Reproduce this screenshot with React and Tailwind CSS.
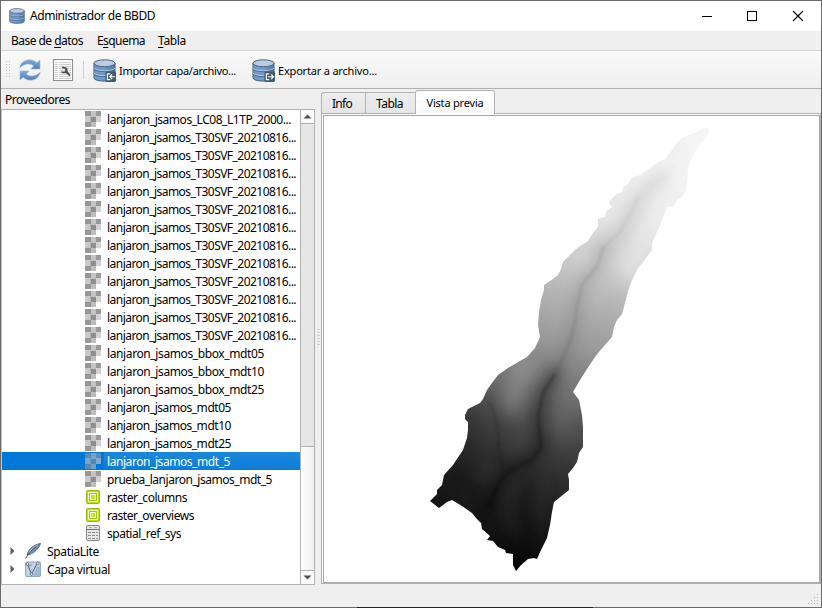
import React from "react";

const rows = [
  { t: "lanjaron_jsamos_LC08_L1TP_2000...", w: 184 },
  ...Array.from({ length: 12 }, () => ({ t: "lanjaron_jsamos_T30SVF_20210816...", w: 189 })),
  { t: "lanjaron_jsamos_bbox_mdt05", w: 157 },
  { t: "lanjaron_jsamos_bbox_mdt10", w: 157 },
  { t: "lanjaron_jsamos_bbox_mdt25", w: 157 },
  { t: "lanjaron_jsamos_mdt05", w: 124 },
  { t: "lanjaron_jsamos_mdt10", w: 124 },
  { t: "lanjaron_jsamos_mdt25", w: 124 },
  { t: "lanjaron_jsamos_mdt_5", w: 123, selected: true },
  { t: "prueba_lanjaron_jsamos_mdt_5", w: 165 },
  { t: "raster_columns", w: 80, icon: "polygon" },
  { t: "raster_overviews", w: 87, icon: "polygon" },
  { t: "spatial_ref_sys", w: 74, icon: "table" },
];

// Label whose letter spacing is adjusted so that it occupies the width w.
function Label({ w, children, className = "" }) {
  const ref = React.useRef(null);
  const [ls, setLs] = React.useState(0);
  React.useLayoutEffect(() => {
    const el = ref.current;
    const n = el.textContent.length;
    el.style.letterSpacing = "0px";
    const v = (w - el.getBoundingClientRect().width) / n;
    el.style.letterSpacing = v + "px";
    setLs(v);
  }, [w]);
  return (
    <span ref={ref} className={"whitespace-pre " + className} style={{ letterSpacing: ls + "px" }}>
      {children}
    </span>
  );
}

function Db({ size, arrow }) {
  return (
    <svg width={size} height={size} viewBox="0 0 24 24" className="block shrink-0">
      <defs>
        <linearGradient id="dbBody" x1="0" x2="1">
          <stop offset="0" stopColor="#7197c4" />
          <stop offset="0.45" stopColor="#6f9bd0" />
          <stop offset="1" stopColor="#5279a8" />
        </linearGradient>
      </defs>
      <path d="M1 4.2V19.8C1 24.2 23 24.2 23 19.8V4.2Z" fill="url(#dbBody)" stroke="#4b6076" strokeWidth="1" />
      <path d="M1 9.2C1 13.2 23 13.2 23 9.2M1 14.4C1 18.4 23 18.4 23 14.4" fill="none" stroke="#c3d3e5" strokeWidth="0.9" />
      <path d="M1 10.2C1 14.2 23 14.2 23 10.2M1 15.4C1 19.4 23 19.4 23 15.4" fill="none" stroke="#456789" strokeWidth="0.9" />
      <ellipse cx="12" cy="4.4" rx="11" ry="3.6" fill="#b9cce1" stroke="#4b6076" strokeWidth="1" />
      {arrow && (
        <g>
          <rect x="13" y="13" width="11" height="11" rx="1.5" fill="#415a6b" />
          {arrow === "in" ? (
            <path d="M18 15.5H15V21.5H18M23 18.5H17.5M20 16L17.5 18.5L20 21" fill="none" stroke="#fff" strokeWidth="1.2" />
          ) : (
            <path d="M18 15.5H15V21.5H18M16.5 18.5H22.5M20 16L22.5 18.5L20 21" fill="none" stroke="#fff" strokeWidth="1.2" />
          )}
        </g>
      )}
    </svg>
  );
}

function Refresh() {
  return (
    <svg width="22" height="22" viewBox="0 0 22 22" className="block shrink-0">
      <defs>
        <linearGradient id="rf" x1="0" y1="0" x2="0" y2="1">
          <stop offset="0" stopColor="#82aadb" />
          <stop offset="1" stopColor="#4d7fba" />
        </linearGradient>
      </defs>
      <path d="M0.8 9C1.5 3.5 6 0.8 10.5 0.8C13.7 0.8 16 2 17.8 3.7L21 1V10H11.8L14.7 7C12 4.2 5.5 3.8 0.8 9Z" fill="url(#rf)" stroke="#9dbbe0" strokeWidth="0.6" />
      <path d="M21.2 13C20.5 18.5 16 21.2 11.5 21.2C8.3 21.2 6 20 4.2 18.3L1 21V12H10.2L7.3 15C10 17.8 16.5 18.2 21.2 13Z" fill="url(#rf)" stroke="#9dbbe0" strokeWidth="0.6" />
    </svg>
  );
}

function SqlWindow() {
  return (
    <svg width="20" height="22" viewBox="0 0 20 22" className="block shrink-0">
      <rect x="0.5" y="0.5" width="19" height="21" fill="#fbfbfb" stroke="#8c8c8c" />
      <path d="M2 3.5H18M2 5.5H18M2 7.5H18M2 9.5H18M2 11.5H18M2 13.5H18M2 15.5H18M2 17.5H18M2 19.5H18" stroke="#cfcfcf" />
      <path d="M5.5 1V21" stroke="#fbfbfb" />
      <path d="M9 8C11 7.3 13.4 8 14.2 9.7C14.8 11 14.3 12.2 15.2 13.3L17.6 16L16.4 17.3L13.6 14.4C12.3 13.8 10.2 14.8 8.4 13.4V12.2L11.2 12.8L12.5 11.7L11.7 9.7L9 9.2Z" fill="#4a4a4a" />
    </svg>
  );
}

function Raster({ selected }) {
  return (
    <svg width="16" height="16" viewBox="0 0 16 16" className="block shrink-0" shapeRendering="crispEdges">
      <rect width="16" height="16" fill={selected ? "#0078d7" : "#fff"} />
      <rect x="0" y="0" width="6" height="5" fill="#969696" />
      <rect x="6" y="0" width="5" height="6" fill="#c4c4c4" />
      <rect x="11" y="0" width="5" height="5" fill="#999" />
      <rect x="0" y="5" width="6" height="6" fill="#c9c9c9" />
      <rect x="6" y="6" width="5" height="5" fill="#8f8f8f" />
      <rect x="11" y="5" width="5" height="6" fill="#d1d1d1" />
      <rect x="0" y="11" width="6" height="5" fill="#979797" />
      <rect x="6" y="11" width="5" height="5" fill="#bdbdbd" />
      <rect x="5" y="5" width="1" height="6" fill="#b1b1b1" />
      {selected && <rect width="16" height="16" fill="#0078d7" opacity="0.42" />}
    </svg>
  );
}

function Polygon() {
  return (
    <svg width="16" height="16" viewBox="0 0 16 16" className="block shrink-0">
      <rect x="1.5" y="1.5" width="13" height="13" rx="1" fill="#b9dc1c" stroke="#94bd00" />
      <rect x="3.5" y="3.5" width="9" height="9" fill="#9dc51a" stroke="#f4fac8" />
      <rect x="5.5" y="5.5" width="5" height="5" fill="#c4e33c" stroke="#f4fac8" />
    </svg>
  );
}

function TableIcon() {
  return (
    <svg width="16" height="16" viewBox="0 0 16 16" className="block shrink-0">
      <rect x="1.5" y="0.5" width="13" height="15" rx="1.5" fill="#e6e6e6" stroke="#858585" />
      <path d="M2 4.5H14" stroke="#777" />
      <path d="M4 2.5H7M9 2.5H12" stroke="#aaa" />
      <path d="M3 7.5H6M7 7.5H10M11 7.5H13M3 10.5H6M7 10.5H10M11 10.5H13M3 13.5H6M7 13.5H10M11 13.5H13" stroke="#8c8c8c" />
    </svg>
  );
}

function Feather() {
  return (
    <svg width="16" height="16" viewBox="0 0 16 16" className="block shrink-0">
      <path d="M2 12C3 7 8 1.5 15.5 0.5C14.5 4 11 8.5 6.5 10.8C4.8 11.7 3.4 12 2 12Z" fill="#6f94b8" stroke="#405f7c" strokeWidth="0.8" />
      <path d="M0.7 15.5C3 10.5 8 5.5 14.5 1.2" fill="none" stroke="#3b4f63" strokeWidth="1" />
      <path d="M4 9.5C6.5 6 10 3 13.5 1.7" fill="none" stroke="#c1d3e3" strokeWidth="0.8" />
    </svg>
  );
}

function Virtual() {
  return (
    <svg width="16" height="16" viewBox="0 0 16 16" className="block shrink-0">
      <rect x="0.5" y="1" width="15" height="14.5" rx="1" fill="#c0d2e5" stroke="#7d98b4" strokeWidth="0.8" />
      <path d="M15 5V15H8L12 6Z" fill="#9ab8d8" />
      <path d="M2.5 3L6.5 13L12.5 2" fill="none" stroke="#50606e" strokeWidth="1" />
      <path d="M2.5 3C4 5 5.5 5 7 3.5" fill="none" stroke="#7b8791" strokeWidth="0.8" />
      <circle cx="2.5" cy="3" r="1.3" fill="#e9eff5" stroke="#50606e" strokeWidth="0.7" />
      <circle cx="6.5" cy="13" r="1.3" fill="#e9eff5" stroke="#50606e" strokeWidth="0.7" />
      <circle cx="12.8" cy="2.2" r="1.3" fill="#e9eff5" stroke="#50606e" strokeWidth="0.7" />
    </svg>
  );
}

const outline =
  "708,128 703,128 695,133 688,135 682,138 675,145 672,150 668,155 666,159 660,161 650,168 640,175 632,177 628,184 623,187 622,192 615,195 609,202 612,207 606,212 605,217 598,219 598,227 593,233 588,241 580,246 575,250 563,262 561,269 558,275 550,281 544,285 544,290 541,300 539,312 538,325 540,337 535,348 527,357 520,361 508,368 498,375 492,383 487,390 483,399 480,403 468,409 465,415 465,419 468,422 468,430 467,438 463,450 453,465 444,475 442,485 437,490 437,494 430,501 439,508 447,502 452,500 462,506 472,513 476,518 481,523 482,529 490,536 487,540 493,541 498,547 505,550 506,553 513,554 513,565 516,571 521,565 528,559 534,558 537,559 541,550 547,538 550,525 552,512 554,502 569,490 569,480 568,474 573,468 577,462 579,453 583,447 583,427 582,415 579,400 573,392 580,380 587,369 593,360 598,353 605,345 612,337 614,327 617,320 622,314 624,307 628,291 632,280 638,268 643,262 652,250 652,243 660,225 667,207 674,206 677,199 682,197 686,190 687,182 688,168 691,160 693,155 700,144 706,138 709,131";

const full = { filterUnits: "userSpaceOnUse", x: 380, y: 100, width: 380, height: 500 };

function Terrain() {
  return (
    <svg width="495" height="466" viewBox="324 116 495 466" className="block">
      <defs>
        <linearGradient id="relief" gradientUnits="userSpaceOnUse" x1="628" y1="128" x2="520" y2="566">
          <stop offset="0" stopColor="#f2f2f2" />
          <stop offset="0.1" stopColor="#ececec" />
          <stop offset="0.2" stopColor="#e0e0e0" />
          <stop offset="0.3" stopColor="#cecece" />
          <stop offset="0.4" stopColor="#b2b2b2" />
          <stop offset="0.5" stopColor="#989898" />
          <stop offset="0.57" stopColor="#7c7c7c" />
          <stop offset="0.64" stopColor="#5e5e5e" />
          <stop offset="0.71" stopColor="#454545" />
          <stop offset="0.78" stopColor="#303030" />
          <stop offset="0.86" stopColor="#202020" />
          <stop offset="0.93" stopColor="#151515" />
          <stop offset="1" stopColor="#060606" />
        </linearGradient>
        <clipPath id="basin">
          <polygon points={outline} />
        </clipPath>
        <filter id="wide" {...full}>
          <feGaussianBlur stdDeviation="9" />
        </filter>
        <filter id="mid" {...full}>
          <feGaussianBlur stdDeviation="6.5" />
        </filter>
        <filter id="fine" {...full}>
          <feGaussianBlur stdDeviation="1.8" />
        </filter>
      </defs>
      <g clipPath="url(#basin)" shapeRendering="crispEdges">
        <rect x="420" y="120" width="300" height="455" fill="url(#relief)" />
        <g fill="none" strokeLinejoin="round" strokeLinecap="round">
          <path d="M524 366L514 388L512 405" stroke="#b0b0b0" strokeWidth="18" opacity="0.45" filter="url(#wide)" />
          <path d="M468 408L472 440L455 475L440 500" stroke="#000" strokeWidth="24" opacity="0.22" filter="url(#wide)" />
          <path d="M574 395L568 415L558 435" stroke="#909090" strokeWidth="14" opacity="0.3" filter="url(#wide)" />
          <path d="M708 128L690 165L678 195L660 215L645 245L628 275" stroke="#fff" strokeWidth="16" opacity="0.5" filter="url(#wide)" />
          <path d="M670 160L640 178L615 205L603 225" stroke="#fff" strokeWidth="8" opacity="0.35" filter="url(#mid)" />
          <path d="M664 175L650 185L638 198L630 215L620 232L603 248" stroke="#777" strokeWidth="10" opacity="0.16" filter="url(#mid)" />
          <path d="M603 248L598 265L582 285L577 307L575 323L568 347L557 370L543 393" stroke="#303030" strokeWidth="10" opacity="0.17" filter="url(#mid)" />
          <path d="M555 372L543 395L538 417L541 447L532 460L507 472L497 487L488 507L484 520" stroke="#000" strokeWidth="11" opacity="0.38" filter="url(#mid)" />
          <path d="M638 198L630 215L620 232L603 248" stroke="#666" strokeWidth="2" opacity="0.1" filter="url(#fine)" />
          <path d="M603 248L598 265L582 285L577 307L575 323L568 347L557 370" stroke="#222" strokeWidth="2" opacity="0.14" filter="url(#fine)" />
          <path d="M555 374L543 393L538 417L541 447L532 460L507 472L497 487L488 507" stroke="#000" strokeWidth="3" opacity="0.25" filter="url(#fine)" />
          <path d="M489 395L497 420L498 445L502 467" stroke="#000" strokeWidth="5" opacity="0.25" filter="url(#mid)" />
          <path d="M490 403L497 423L499 445L502 463" stroke="#000" strokeWidth="1.5" opacity="0.2" filter="url(#fine)" />
          <path d="M540 445L558 432L580 420" stroke="#000" strokeWidth="4" opacity="0.15" filter="url(#mid)" />
          <path d="M455 470L470 483L480 505M530 480L525 510L530 530L522 565" stroke="#000" strokeWidth="6" opacity="0.4" filter="url(#mid)" />
          <path d="M512 483L505 510L515 535M545 480L538 510L543 530M492 465L480 480" stroke="#555" strokeWidth="5" opacity="0.2" filter="url(#mid)" />
        </g>
      </g>
    </svg>
  );
}

function Arrow({ up }) {
  return (
    <svg width="9" height="5" viewBox="0 0 9 5" className="block">
      <path d={up ? "M0.5 4.5L4.5 0.5L8.5 4.5Z" : "M0.5 0.5L4.5 4.5L8.5 0.5Z"} fill="#505050" />
    </svg>
  );
}

function TreeRoot({ icon, text, w }) {
  return (
    <div className="flex h-[18px] items-center pl-[8px]">
      <svg width="5" height="8" viewBox="0 0 5 8" className="block"><path d="M0.5 0L4.5 4L0.5 8Z" fill="#5c5c5c" /></svg>
      <div className="ml-[10px]">{icon}</div>
      <div className="ml-[6px] pt-[2px]"><Label w={w}>{text}</Label></div>
    </div>
  );
}

export default function App() {
  return (
    <div className="relative flex h-[608px] w-[822px] flex-col border border-[#6b6b6b] bg-[#efefef] font-['Noto_Sans','Open_Sans',sans-serif] text-[12px] leading-[18px] text-black">
      <div className="flex h-[30px] shrink-0 items-center bg-white pl-2">
        <Db size={16} />
        <div className="ml-[5px] flex-1"><Label w={125}>Administrador de BBDD</Label></div>
        <svg width="103" height="12" viewBox="0 0 103 12" className="mr-[16px] block">
          <g fill="none" stroke="#000">
            <path d="M0 6.5H10M45.5 1.5H54.5V10.5H45.5Z" shapeRendering="crispEdges" />
            <path d="M91 1L101 11M101 1L91 11" strokeWidth="1.1" />
          </g>
        </svg>
      </div>
      <div className="flex h-[20px] shrink-0 items-center border-b border-[#d6d6d6] pl-[10px]">
        <Label w={72}>Base de <u className="underline-offset-2">d</u>atos</Label>
        <Label w={48} className="ml-[14px]">E<u className="underline-offset-2">s</u>quema</Label>
        <Label w={28} className="ml-[13px]"><u className="underline-offset-2">T</u>abla</Label>
      </div>
      <div className="flex h-[38px] shrink-0 items-center border-b border-[#b1b1b1] bg-linear-to-b from-[#fafafa] to-[#efefef] pl-[5px] text-[11px]">
        <svg width="5" height="18" className="block">
          <g stroke="#bcbcbc" strokeDasharray="1 2"><path d="M0.5 0V18M3.5 0V18" /></g>
        </svg>
        <div className="ml-[8px]"><Refresh /></div>
        <div className="ml-[12px]"><SqlWindow /></div>
        <div className="ml-[10px] h-[18px] w-px bg-[#d0d0d0]" />
        <div className="ml-[9px] pt-px"><Db size={23} arrow="in" /></div>
        <Label w={117} className="ml-[3px] pt-[2px]">Importar capa/archivo...</Label>
        <div className="ml-[16px] pt-px"><Db size={23} arrow="out" /></div>
        <Label w={99} className="ml-[3px] pt-[2px]">Exportar a archivo...</Label>
      </div>
      <div className="flex h-[496px] shrink-0">
        <div className="w-[314px]">
          <div className="h-[20px] pl-1 pt-[2px]"><Label w={65}>Proveedores</Label></div>
          <div className="flex h-[476px] border border-[#b1b1b1] border-l-[#c4c4c4] bg-white">
            <div className="w-[298px]">
              {rows.map((r, i) => (
                <div key={i} className={"flex h-[18px] items-center pl-[83px] " + (r.selected ? "bg-[#0078d7] text-white" : "")}>
                  {r.icon === "polygon" ? <Polygon /> : r.icon === "table" ? <TableIcon /> : <Raster selected={r.selected} />}
                  <div className={"ml-[3px] flex h-[18px] flex-1 items-center pl-[3px] pt-[2px] " + (r.selected ? "bg-linear-to-b from-[#1b87de] to-[#0b7cd9]" : "")}>
                    <Label w={r.w}>{r.t}</Label>
                  </div>
                </div>
              ))}
              <TreeRoot icon={<Feather />} text="SpatiaLite" w={52} />
              <TreeRoot icon={<Virtual />} text="Capa virtual" w={63} />
            </div>
            <div className="flex w-[14px] flex-col border-l border-[#b1b1b1]">
              <div className="flex h-[14px] items-center justify-center border-b border-[#b1b1b1] bg-[#fafafa]"><Arrow up /></div>
              <div className="h-[323px] border-b border-[#b1b1b1] bg-[#e6e6e6]" />
              <div className="h-[124px] border-b border-[#b1b1b1] bg-linear-to-r from-white to-[#f0f0f0]" />
              <div className="flex flex-1 items-center justify-center bg-[#fafafa]"><Arrow /></div>
            </div>
          </div>
        </div>
        <div className="flex w-[6px] items-center justify-center">
          <svg width="3" height="16" className="block"><path d="M1.5 0V16" stroke="#c0c0c0" strokeWidth="2" strokeDasharray="1 2" /></svg>
        </div>
        <div className="flex w-[500px] flex-col">
          <div className="flex h-[25px] items-end">
            <div className="flex h-[22px] w-[44px] items-center rounded-tl-[3px] border border-r-0 border-[#b1b1b1] bg-linear-to-b from-[#ededed] to-[#e6e6e6] pl-[10px] pt-[2px]"><Label w={20}>Info</Label></div>
            <div className="flex h-[22px] w-[50px] items-center border border-r-0 border-[#b1b1b1] bg-linear-to-b from-[#ededed] to-[#e6e6e6] pl-[10px] pt-[2px]"><Label w={27}>Tabla</Label></div>
            <div className="flex h-[24px] w-[80px] items-center justify-center rounded-t-[3px] border border-b-0 border-[#b1b1b1] bg-linear-to-b from-white to-[#fafafa] pt-px"><Label w={57} className="text-[11px]">Vista previa</Label></div>
            <div className="h-px flex-1 bg-[#b1b1b1]" />
          </div>
          <div className="h-[470px] border-x border-b border-[#b1b1b1] bg-white p-px pb-0">
            <div className="h-[468px] w-[497px] border border-[#a8a8a8] bg-white"><Terrain /></div>
          </div>
        </div>
      </div>
      <div className="flex flex-1 items-end justify-end pb-[2px] pr-[2px]">
        <svg width="11" height="11" viewBox="0 0 11 11" className="block" shapeRendering="crispEdges">
          <path d="M9 0h1v1h-1zM6 3h1v1h-1zM9 3h1v1h-1zM3 6h1v1h-1zM6 6h1v1h-1zM9 6h1v1h-1zM0 9h1v1h-1zM3 9h1v1h-1zM6 9h1v1h-1zM9 9h1v1h-1z" fill="#b5b5b5" />
        </svg>
      </div>
      <div className="absolute bottom-[-1px] left-[356px] h-px w-[236px] bg-[#222]" />
    </div>
  );
}
